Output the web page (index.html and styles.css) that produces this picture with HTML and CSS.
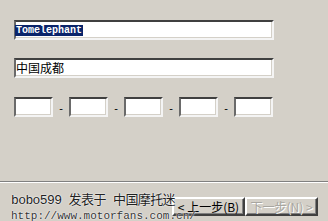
FILE: index.html
```html
<!DOCTYPE html>
<html>
<head>
<meta charset="utf-8">
<link rel="stylesheet" href="styles.css">
</head>
<body>
<div class="dialog">
  <div class="content">
    <div class="field field-first"><span class="sel">Tomelephant</span></div>
    <div class="field field-second"><span class="cn">中国成都</span></div>
    <div class="ip-row">
      <div class="box"></div><span class="dash">-</span>
      <div class="box"></div><span class="dash">-</span>
      <div class="box"></div><span class="dash">-</span>
      <div class="box"></div><span class="dash">-</span>
      <div class="box"></div>
    </div>
  </div>
  <div class="separator"></div>
  <div class="footer">
    <div class="buttons">
      <div class="btn">&lt; 上一步(<u>B</u>)</div>
      <div class="btn disabled">下一步(<u>N</u>) &gt;</div>
    </div>
    <div class="watermark">
      <div class="wm1">bobo599 发表于 中国摩托迷</div>
      <div class="wm2">http://www.motorfans.com.cn/</div>
    </div>
  </div>
</div>
</body>
</html>
```

FILE: styles.css
```css
html, body {
  margin: 0;
  padding: 0;
}
body {
  width: 328px;
  height: 221px;
  overflow: hidden;
  background: #d4d0c8;
  font-family: "Liberation Sans", "Noto Sans CJK SC", sans-serif;
}
.dialog {
  display: flex;
  flex-direction: column;
  height: 221px;
}
.content {
  padding: 20px 0 0 14px;
  display: flex;
  flex-direction: column;
}
.field {
  width: 256px;
  height: 16px;
  background: #fff;
  border: 2px solid;
  border-color: #404040 #f4f4f4 #f4f4f4 #6a6a6a;
  box-shadow: inset -1px -1px #d4d0c8;
  display: flex;
  align-items: center;
}
.field-second {
  margin-top: 18px;
}
.sel {
  background: #0a246a;
  color: #fff;
  font-family: "Liberation Mono", monospace;
  font-weight: bold;
  font-size: 10px;
  line-height: 11px;
  height: 11px;
  padding: 0 1px;
  margin-left: -1px;
}
.cn {
  font-family: "Noto Sans CJK SC", sans-serif;
  font-size: 12px;
  line-height: 14px;
  color: #000;
  margin-left: 0;
}
.ip-row {
  margin-top: 19px;
  display: flex;
  align-items: center;
  height: 20px;
}
.box {
  width: 35px;
  height: 16px;
  background: #fff;
  border: 2px solid;
  border-color: #404040 #f4f4f4 #f4f4f4 #6a6a6a;
  box-shadow: inset -1px -1px #d4d0c8;
}
.dash {
  width: 16px;
  text-align: center;
  font-family: "Liberation Sans", sans-serif;
  font-size: 11px;
  line-height: 20px;
  color: #000;
  padding-top: 2px;
}
.separator {
  margin-top: 64px;
  height: 1px;
  background: #808080;
  border-bottom: 1px solid #fff;
}
.footer {
  position: relative;
  flex: 1;
}
.buttons {
  display: flex;
  justify-content: flex-end;
  padding: 14px 10px 0 0;
}
.btn {
  width: 69px;
  height: 15px;
  border: 2px solid;
  border-color: #fff #404040 #404040 #fff;
  box-shadow: inset -1px -1px #808080;
  font-family: "Noto Sans CJK SC", sans-serif;
  font-size: 12px;
  line-height: 15px;
  text-align: center;
  color: #000;
}
.btn u {
  text-decoration: none;
}
.btn.disabled {
  color: #a8a6a0;
  text-shadow: 1px 1px #fff;
}
.watermark {
  position: absolute;
  left: 11px;
  top: 10px;
  color: #222;
  text-shadow: 0 0 2px #fff, 0 0 1px #fff;
}
.wm1 {
  font-family: "Liberation Mono", "Noto Sans CJK SC", monospace;
  font-size: 13px;
  line-height: 16px;
  letter-spacing: -0.6px;
}
.wm2 {
  font-family: "Liberation Mono", monospace;
  font-size: 11px;
  line-height: 14px;
  color: #333;
}
```
